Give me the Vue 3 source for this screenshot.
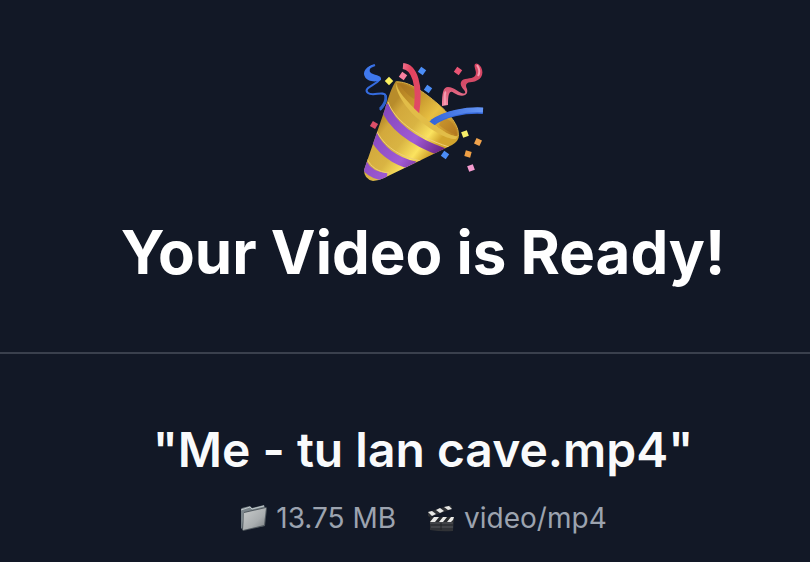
<script setup>
const title = 'Your Video is Ready!'
const file = { name: '"Me - tu lan cave.mp4"', size: '13.75 MB', type: 'video/mp4' }

const confetti = [
  { x: 36, y: 29, turn: 45, fill: '#fbf160' },
  { x: 50, y: 24, turn: 35, fill: '#f5809f' },
  { x: 69, y: 19, turn: 35, fill: '#4b8df6' },
  { x: 75, y: 37, turn: 35, fill: '#4b8df6' },
  { x: 105, y: 19, turn: 35, fill: '#e95575' },
  { x: 21, y: 73, turn: 30, fill: '#dc4f68' },
  { x: 112, y: 82, turn: -20, fill: '#f7ed68' },
  { x: 125, y: 90, turn: 25, fill: '#f1a34c' },
  { x: 115, y: 102, turn: 15, fill: '#ef9f45' },
  { x: 92, y: 103, turn: 35, fill: '#4b8df6' },
  { x: 118, y: 116, turn: -20, fill: '#f59bd0' },
]
</script>

<template>
  <main class="page">
    <header class="hero">
      <svg class="popper" viewBox="0 0 140 136" role="img" aria-label="Party popper">
        <defs>
          <linearGradient id="gold" gradientUnits="userSpaceOnUse" x1="25" y1="72" x2="72" y2="108">
            <stop offset="0" stop-color="#b88c2b" />
            <stop offset=".15" stop-color="#d3a93c" />
            <stop offset=".5" stop-color="#d9b443" />
            <stop offset=".8" stop-color="#fbe35f" />
            <stop offset="1" stop-color="#d3a52d" />
          </linearGradient>
          <linearGradient id="violet" gradientUnits="userSpaceOnUse" x1="25" y1="65" x2="85" y2="105">
            <stop offset="0" stop-color="#8548bd" />
            <stop offset=".6" stop-color="#a05bd4" />
            <stop offset="1" stop-color="#6b2586" />
          </linearGradient>
          <linearGradient id="inside" gradientUnits="userSpaceOnUse" x1="45" y1="32" x2="102" y2="84">
            <stop offset="0" stop-color="#b07b20" />
            <stop offset=".35" stop-color="#c99a2e" />
            <stop offset=".6" stop-color="#e8c043" />
            <stop offset="1" stop-color="#b97f22" />
          </linearGradient>
          <linearGradient id="red" x1="0" y1="0" x2="1" y2="1">
            <stop offset="0" stop-color="#f16c88" />
            <stop offset=".3" stop-color="#e2435f" />
            <stop offset="1" stop-color="#e04a66" />
          </linearGradient>
          <linearGradient id="blue" x1="0" y1="0" x2="1" y2="0">
            <stop offset="0" stop-color="#3565d8" />
            <stop offset="1" stop-color="#6596f6" />
          </linearGradient>
          <linearGradient id="ribbon" x1="0" y1="0" x2="0" y2="1">
            <stop offset="0" stop-color="#d94362" />
            <stop offset=".5" stop-color="#d44c68" />
            <stop offset="1" stop-color="#f58aa6" />
          </linearGradient>
          <clipPath id="cone">
            <path d="M43 29 C39 34 35 46 32 57 L11 118 Q11 127 20 129 Q25 129 31 126 L99 93 Q106 89 106 83 C80 50 60 32 43 29Z" />
          </clipPath>
        </defs>
        <g clip-path="url(#cone)">
          <path d="M0 20H120V136H0Z" fill="url(#gold)" />
          <g fill="none" stroke="url(#violet)" stroke-width="9">
            <path d="M31 53 C37 70 55 88 92 101" />
            <path d="M19 81 C27 99 41 109 62 114" />
            <path d="M10 111 C14 119 21 124 34 125" stroke-width="8" />
          </g>
          <g fill="none" stroke="#efcf78" stroke-width="1">
            <path d="M35 50 C41 66 59 83 96 95" />
            <path d="M23 78 C31 94 45 104 68 109" />
            <path d="M14 107 C18 115 25 120 36 121" />
          </g>
        </g>
        <path d="M44 30 C55 29 71 40 85 52 C99 64 107 76 105 84 C98 86 79 72 66 61 C53 49 44 38 44 30Z" fill="url(#inside)" />
        <path d="M46 32 C51 39 57 45 61 47 L67 41 C60 36 52 32 46 32Z" fill="#98681f" opacity=".3" />
        <path d="M89 67 C97 65 103 74 104 83 C97 81 91 77 86 73Z" fill="#a96a19" opacity=".35" />
        <path d="M44 30 C55 29 71 40 85 52 C99 64 107 76 105 84" fill="none" stroke="#dcb448" stroke-width="1" />
        <path d="M50 14 C61 15 68 32 63 62" fill="none" stroke="url(#red)" stroke-width="6" />
        <path d="M78 72 C91 62 111 58 130 59" fill="none" stroke="#3669db" stroke-width="6" />
        <path d="M79 70 C93 61 113 57 130 58" fill="none" stroke="url(#blue)" stroke-width="5" />
        <path d="M43 31 C44 38 53 49 66 61 C79 72 98 86 105 84 L103 87 C95 88 77 78 64 66 C51 54 42 39 43 31Z" fill="#e2bd48" />
        <path d="M22 13 C10 17 11 25 20 26 C25 27 28 25 26 28 C23 33 9 36 15 41 C20 45 31 38 33 44 C34 49 31 54 27 58" fill="none" stroke="#356ce0" stroke-width="2" />
        <path d="M22 12 C13 14 9 20 12 25 C14 29 22 31 28 28 C29 22 20 24 17 20 C16 17 18 14 22 12Z" fill="#3f78ed" />
        <path d="M33 43 C36 47 32 54 28 58 L26 56 C31 51 32 47 31 43Z" fill="#2f62ca" />
        <path d="M89 54 C89 41 90 35 95 35 C102 35 109 44 112 41 C114 39 106 35 108 30 C110 25 118 28 122 24 C125 20 120 15 122 12 Q125 10 128 15 C132 23 127 29 119 30 C113 30 112 33 114 37 C116 45 107 45 101 41 C97 38 95 40 95 53Z" fill="url(#ribbon)" />
        <path d="M92 53 C92 45 91 41 93 40 M124 13 Q128 19 125 24" fill="none" stroke="#f69bb0" stroke-width="2" />
        <rect v-for="(piece, i) in confetti" :key="i" :x="piece.x - 3" :y="piece.y - 3" width="6" height="6" :fill="piece.fill" :transform="`rotate(${piece.turn} ${piece.x} ${piece.y})`" />
      </svg>
      <h1 class="title">{{ title }}</h1>
    </header>
    <section class="details">
      <h2 class="name">{{ file.name }}</h2>
      <div class="meta">
        <span class="item">
          <svg class="icon" viewBox="0 0 30 30" aria-hidden="true">
            <defs>
              <linearGradient id="folder" x1="0" y1="0" x2="1" y2="1">
                <stop offset="0" stop-color="#c9cccc" />
                <stop offset=".6" stop-color="#a9adaf" />
                <stop offset="1" stop-color="#777c80" />
              </linearGradient>
            </defs>
            <path d="M2 6 L3 5 L11 3 L13 5 L25 2 L26 5 L25 23 L4 27 L2 25Z" fill="#7b858b" />
            <path d="M2 7 L11 4 L13 6 L25 3" fill="none" stroke="#bfc7ca" stroke-width="1" />
            <path d="M5 9 L27 4 L28 5 L26 23 L4 28 L3 26Z" fill="#50585e" />
            <path d="M5 10 L27 5 L25 22 L4 27Z" fill="url(#folder)" />
          </svg>
          {{ file.size }}
        </span>
        <span class="item">
          <svg class="icon" viewBox="0 0 30 30" aria-hidden="true">
            <path d="M3 14H27L26 28Q15 29 3 27Z" fill="#303236" />
            <path d="M3 20H26M4 24H26" fill="none" stroke="#55575a" stroke-width="1" />
            <path d="M14 20V27" stroke="#202225" stroke-width="1" />
            <path d="M1 9 L24 2 L25 6 L3 14 L1 13Z" fill="#303236" />
            <path d="M1 9 L5 8 L9 11 L5 13Z M9 7 L13 5 L17 8 L13 10Z M17 4 L22 3 L25 6 L21 7Z" fill="#e9e9e7" />
            <path d="M3 14H27V19H3Z" fill="#292b2e" />
            <path d="M7 14H12L8 19H3Z M16 14H20L16 19H12Z M24 14H27L26 17L24 19H20Z" fill="#e9e9e7" />
          </svg>
          {{ file.type }}
        </span>
      </div>
    </section>
  </main>
</template>

<style>
body { margin: 0; background: #121826; }
</style>

<style scoped>
.page {
  min-height: 100vh;
  background: #121826;
  color: #fff;
  font-family: Inter, sans-serif;
  text-align: center;
}
.hero {
  display: flex;
  flex-direction: column;
  align-items: center;
  padding: 52px 0 64px 36px;
  border-bottom: 2px solid #3a404d;
}
.popper { width: 140px; height: 136px; }
.title { margin: 28px 0 0; font-size: 60px; line-height: 72px; font-weight: 700; }
.details { padding: 64px 0 24px 36px; }
.name { margin: 0; color: #f9fafb; font-size: 48px; line-height: 64px; font-weight: 600; }
.meta {
  display: flex;
  flex-wrap: wrap;
  justify-content: center;
  gap: 31px;
  margin-top: 16px;
  color: #9ca3af;
  font-size: 28px;
  line-height: 40px;
}
.item { display: flex; align-items: center; gap: 7px; }
.icon { width: 30px; height: 30px; }
</style>
